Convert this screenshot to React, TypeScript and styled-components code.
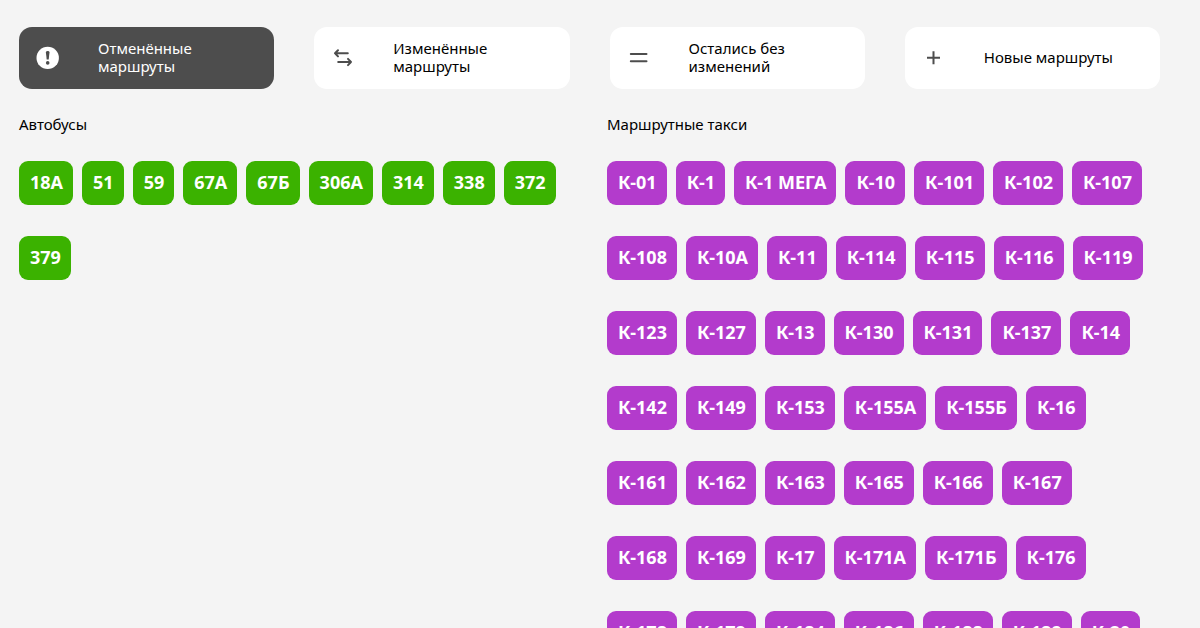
import React, { useState } from "react";
import styled, { createGlobalStyle } from "styled-components";

const GlobalStyle = createGlobalStyle`
  *, *::before, *::after { box-sizing: border-box; }
  body {
    margin: 0;
    background: #f4f4f4;
    color: #000;
    font-family: "Noto Sans", "Open Sans", sans-serif;
    font-size: 15px;
    line-height: 18px;
  }
`;

const Page = styled.main`
  padding: 27px 40px 0 19px;
  height: 100vh;
  overflow: hidden;
`;

const Filters = styled.nav`
  display: grid;
  grid-template-columns: repeat(4, 1fr);
  gap: 40px;
`;

const FilterButton = styled.button<{ $active: boolean }>`
  display: flex;
  align-items: center;
  gap: 36px;
  min-height: 62px;
  padding: 0 15px;
  border: 0;
  border-radius: 13px;
  background: ${(p) => (p.$active ? "#4d4d4d" : "#fff")};
  color: ${(p) => (p.$active ? "#fff" : "#000")};
  font: inherit;
  text-align: left;
  cursor: pointer;
`;

const Icon = styled.svg`
  flex: none;
  width: 28px;
  height: 28px;
  fill: none;
  stroke: #4d4d4d;
  stroke-width: 2;
  stroke-linecap: round;
  stroke-linejoin: round;
`;

const FilterLabel = styled.span`
  max-width: 140px;
  padding-bottom: 2px;
`;

const Columns = styled.div`
  display: grid;
  grid-template-columns: 1fr 1fr;
  gap: 35px;
  padding-top: 26px;
`;

const Title = styled.h2`
  margin: 0 0 28px;
  font-size: 15px;
  line-height: 18px;
  font-weight: 400;
`;

const Chips = styled.div`
  display: flex;
  flex-wrap: wrap;
  gap: 31px 9px;
  padding-right: 14px;
`;

const Chip = styled.a<{ $color: string }>`
  height: 44px;
  padding: 0 10px 0 11px;
  border-radius: 9px;
  background: ${(p) => p.$color};
  color: #fff;
  font-size: 18px;
  line-height: 42px;
  font-weight: 700;
  text-decoration: none;
  white-space: nowrap;
`;

const filters = [
  {
    label: "Отменённые маршруты",
    icon: (
      <>
        <circle cx="13.7" cy="13.9" r="11.2" fill="#fff" stroke="none" />
        <path d="M11.9 8.4Q11.9 7.1 13.7 7.1T15.5 8.4L14.7 15.6H12.7Z" fill="#4d4d4d" stroke="none" />
        <circle cx="13.7" cy="18.9" r="1.8" fill="#4d4d4d" stroke="none" />
      </>
    ),
  },
  {
    label: "Изменённые маршруты",
    icon: <path d="M18.8 9.3H6M9 6.2L6 9.3L9 12.4M9.2 18H22M19 14.9L22 18L19 21.1" />,
  },
  { label: "Остались без изменений", icon: <path d="M5.8 10H21.5M5.8 17.2H21.5" /> },
  { label: "Новые маршруты", icon: <path d="M13.5 7.3V20.3M7 13.8H20" strokeLinecap="butt" /> },
];

const groups = [
  {
    title: "Автобусы",
    color: "#3bb200",
    routes: ["18А", "51", "59", "67А", "67Б", "306А", "314", "338", "372", "379"],
  },
  {
    title: "Маршрутные такси",
    color: "#b33bcc",
    routes: [
      "К-01", "К-1", "К-1 МЕГА", "К-10", "К-101", "К-102", "К-107",
      "К-108", "К-10А", "К-11", "К-114", "К-115", "К-116", "К-119",
      "К-123", "К-127", "К-13", "К-130", "К-131", "К-137", "К-14",
      "К-142", "К-149", "К-153", "К-155А", "К-155Б", "К-16",
      "К-161", "К-162", "К-163", "К-165", "К-166", "К-167",
      "К-168", "К-169", "К-17", "К-171А", "К-171Б", "К-176",
      "К-178", "К-179", "К-184", "К-186", "К-188", "К-189", "К-20",
    ],
  },
];

export default function App() {
  const [active, setActive] = useState(0);
  return (
    <>
      <GlobalStyle />
      <Page>
        <Filters>
          {filters.map((f, i) => (
            <FilterButton key={f.label} type="button" $active={i === active} onClick={() => setActive(i)}>
              <Icon viewBox="0 0 28 28" aria-hidden="true">{f.icon}</Icon>
              <FilterLabel>{f.label}</FilterLabel>
            </FilterButton>
          ))}
        </Filters>
        <Columns>
          {groups.map((g) => (
            <section key={g.title}>
              <Title>{g.title}</Title>
              <Chips>
                {g.routes.map((r) => (
                  <Chip key={r} href={"#" + r} $color={g.color}>{r}</Chip>
                ))}
              </Chips>
            </section>
          ))}
        </Columns>
      </Page>
    </>
  );
}
